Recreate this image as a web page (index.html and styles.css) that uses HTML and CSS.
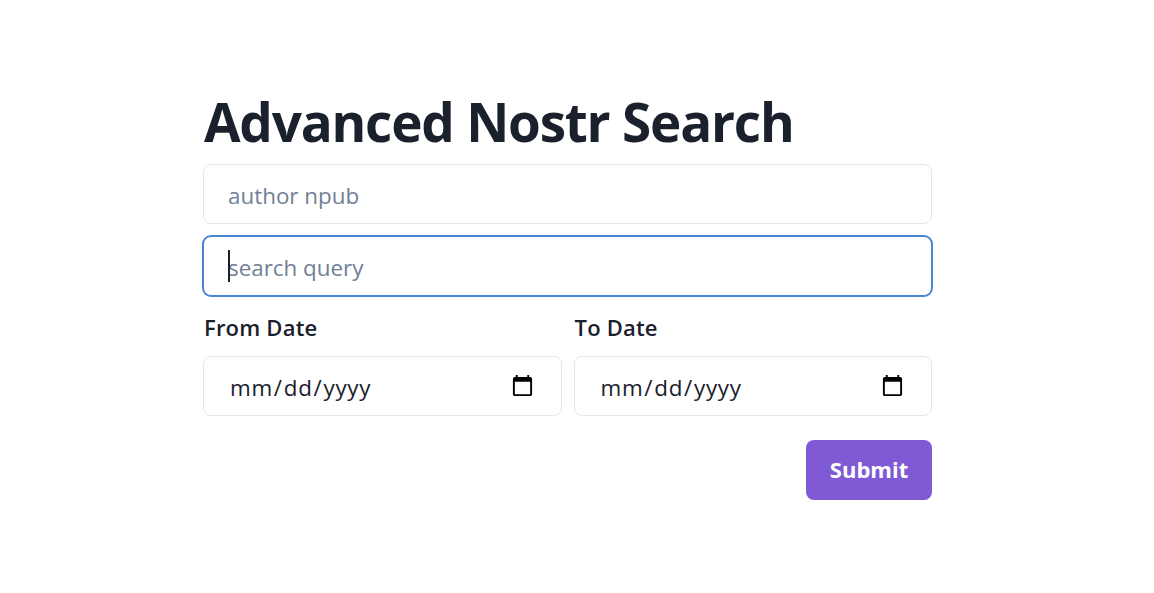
FILE: index.html
```html
<!DOCTYPE html>
<html lang="en">
<head>
<meta charset="utf-8">
<title>Advanced Nostr Search</title>
<link rel="stylesheet" href="styles.css">
</head>
<body>
<main class="page">
  <h1 class="title">Advanced Nostr Search</h1>
  <form class="form">
    <input class="field" type="text" placeholder="author npub">
    <div class="focus-wrap">
      <input class="field field-focus" type="text" placeholder="search query">
      <span class="caret"></span>
    </div>
    <div class="dates">
      <label class="date-group">
        <span class="date-label">From Date</span>
        <input class="field field-date" type="date">
      </label>
      <label class="date-group">
        <span class="date-label">To Date</span>
        <input class="field field-date" type="date">
      </label>
    </div>
    <div class="actions">
      <button class="submit" type="button">Submit</button>
    </div>
  </form>
</main>
</body>
</html>
```
FILE: styles.css
```css
* { box-sizing: border-box; }
html, body { margin: 0; padding: 0; background: #fff; }
body {
  font-family: "Open Sans", "Noto Sans", "Liberation Sans", sans-serif;
  color: #1a202c;
  overflow: hidden;
  height: 593px;
}
.page {
  width: 729px;
  margin-left: 203px;
  padding-top: 88px;
}
.title {
  margin: 0;
  height: 76px;
  padding-left: 1px;
  font-size: 53px;
  line-height: 68px;
  font-weight: 700;
  letter-spacing: -1.2px;
  color: #1a202c;
}
.form {
  display: flex;
  flex-direction: column;
  gap: 12px;
}
.field {
  display: block;
  width: 100%;
  height: 60px;
  padding: 2px 24px 0;
  border: 1px solid #e2e8f0;
  border-radius: 8px;
  background: #fff;
  font-family: inherit;
  font-size: 22.4px;
  color: #1a202c;
  outline: none;
}
.field::placeholder { color: #718096; opacity: 1; }
.focus-wrap { position: relative; }
.field-focus {
  border-color: #4a84d4;
  box-shadow: 0 0 0 1px #4a84d4;
}
.caret {
  position: absolute;
  left: 25px;
  top: 14px;
  width: 2px;
  height: 32px;
  background: #1a202c;
}
.dates {
  display: grid;
  grid-template-columns: 1fr 1fr;
  column-gap: 12px;
}
.date-group {
  display: flex;
  flex-direction: column;
}
.date-label {
  height: 48px;
  padding: 3px 0 0 1px;
  line-height: 32px;
  font-size: 22px;
  font-weight: 600;
  letter-spacing: 0.2px;
  color: #1a202c;
}
.field-date {
  padding-left: 25px;
  padding-right: 26px;
  letter-spacing: 0.7px;
}
.field-date::-webkit-calendar-picker-indicator {
  width: 25px;
  height: 25px;
  padding: 0;
  margin: -2px 0 0;
}
.actions {
  display: flex;
  justify-content: flex-end;
  margin-top: 12px;
}
.submit {
  width: 126px;
  height: 60px;
  padding: 0 0 2px;
  border: 0;
  border-radius: 8px;
  background: #805ad5;
  color: #fff;
  font-family: inherit;
  font-size: 22px;
  font-weight: 700;
}
```
